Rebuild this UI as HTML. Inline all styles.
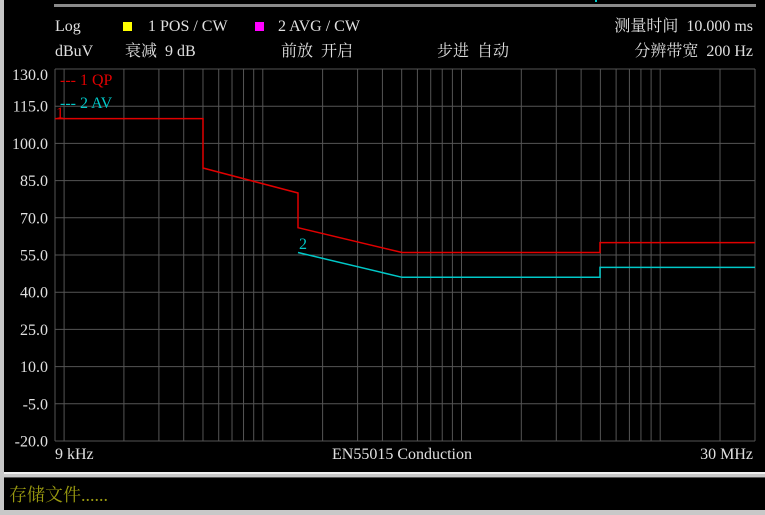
<!DOCTYPE html><html><head><style>
body{margin:0;width:765px;height:515px;background:#c8c8c8;overflow:hidden;position:relative;font-family:"Liberation Serif","Noto Serif CJK SC",serif;color:#e0e0e0;font-size:16px}
.t{position:absolute;white-space:nowrap;line-height:18px}
</style></head><body>
<div style="position:absolute;left:4px;top:0;width:761px;height:472px;background:#000"></div>
<div style="position:absolute;left:4px;top:472px;width:761px;height:2px;background:#eee"></div>
<div style="position:absolute;left:4px;top:477px;width:761px;height:32px;background:#000;border-top:1px solid #555"></div>
<div style="position:absolute;left:54px;top:4px;width:702px;height:3px;background:#8a8a8a"></div>
<div style="position:absolute;left:595px;top:0;width:2px;height:2px;background:#0cc"></div>
<div class="t" style="left:55px;top:18px">Log</div>
<div style="position:absolute;left:123px;top:22px;width:9px;height:9px;background:#ff0"></div>
<div class="t" style="left:148px;top:18px">1 POS / CW</div>
<div style="position:absolute;left:255px;top:22px;width:9px;height:9px;background:#f0f"></div>
<div class="t" style="left:278px;top:18px">2 AVG / CW</div>
<div class="t" style="right:12px;top:18px">测量时间&nbsp; 10.000 ms</div>
<div class="t" style="left:55px;top:43px">dBuV</div>
<div class="t" style="left:125px;top:43px">衰减&nbsp; 9 dB</div>
<div class="t" style="left:281px;top:43px">前放&nbsp; 开启</div>
<div class="t" style="left:437px;top:43px">步进&nbsp; 自动</div>
<div class="t" style="right:12px;top:43px">分辨带宽&nbsp; 200 Hz</div>
<div class="t" style="left:55px;top:446px">9 kHz</div>
<div class="t" style="left:332px;top:446px">EN55015 Conduction</div>
<div class="t" style="right:12px;top:446px">30 MHz</div>
<div class="t" style="left:9px;top:485px;color:#9a9a10;font-size:18px;line-height:20px">存储文件......</div>
<svg width="765" height="515" style="position:absolute;left:0;top:0">
<g id="g" stroke="#555" stroke-width="1" fill="none"></g>
<g fill="none" stroke-width="1.5">
<polyline stroke="#e00000" points="55,118.6 203,118.6 203,168 298,193 298,227.7 402,252.5 600,252.5 600,242.6 755,242.6"/>
<polyline stroke="#00c8c8" points="298,252.5 402,277.3 600,277.3 600,267.4 755,267.4"/>
</g>
<g font-family="Liberation Serif" font-size="16">
<text x="60" y="85" fill="#e00000">--- 1 QP</text>
<text x="60" y="108" fill="#00c8c8">--- 2 AV</text>
<text x="56" y="118" fill="#e00000">1</text>
<text x="299" y="249" fill="#00c8c8">2</text>
<g id="yl" fill="#e0e0e0" text-anchor="end"></g>
</g>
</svg>
<script>
var g=document.getElementById('g'),yl=document.getElementById('yl'),s='';
for(var i=0;i<=10;i++){var y=69+i*37.2;s+='<line x1="55" x2="755" y1="'+y+'" y2="'+y+'"/>';var ty=i==0?80:y+5.5;yl.innerHTML+='<text x="48" y="'+ty+'">'+(130-15*i).toFixed(1)+'</text>';}
s+='<line x1="55" x2="55" y1="69" y2="441"/><line x1="755" x2="755" y1="69" y2="441"/>';
for(var d=1e4;d<3e7;d*=10)for(var n=1;n<10;n++){var f=d*n;if(f>3e7)break;var x=55+198.7*Math.log10(f/9e3);s+='<line x1="'+x+'" x2="'+x+'" y1="69" y2="441"/>';}
g.innerHTML=s;
</script>
</body></html>
